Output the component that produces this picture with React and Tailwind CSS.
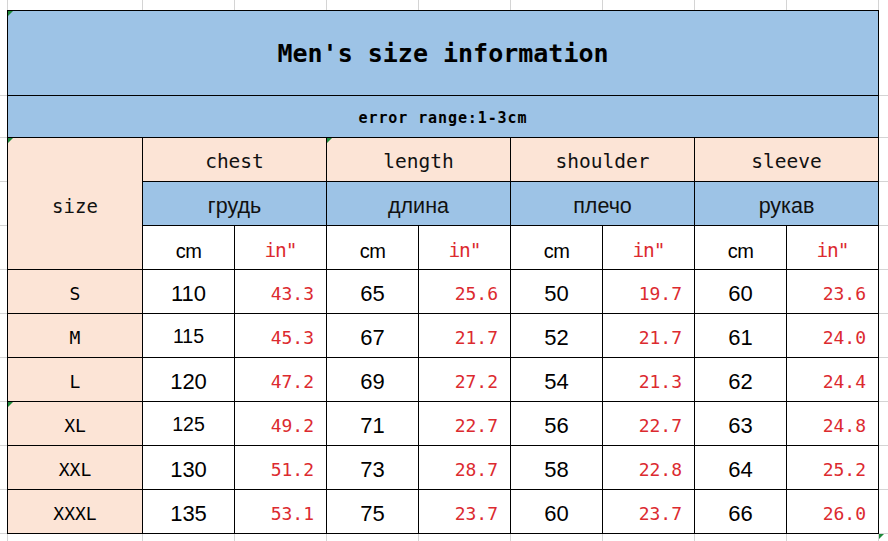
import React from "react";

const mono = "font-['DejaVu_Sans_Mono',monospace]";
const sans = "font-['Liberation_Sans',Arial,sans-serif]";
const blue = "bg-[#9dc3e6]";
const peach = "bg-[#fce4d6]";
const red = "text-[#dc2a2f]";

const rows = [
  ["S", "110", "43.3", "65", "25.6", "50", "19.7", "60", "23.6"],
  ["M", "115", "45.3", "67", "21.7", "52", "21.7", "61", "24.0"],
  ["L", "120", "47.2", "69", "27.2", "54", "21.3", "62", "24.4"],
  ["XL", "125", "49.2", "71", "22.7", "56", "22.7", "63", "24.8"],
  ["XXL", "130", "51.2", "73", "28.7", "58", "22.8", "64", "25.2"],
  ["XXXL", "135", "53.1", "75", "23.7", "60", "23.7", "66", "26.0"],
];

const measures = [
  ["chest", "грудь"],
  ["length", "длина"],
  ["shoulder", "плечо"],
  ["sleeve", "рукав"],
];

// little green marker excel puts in a cell corner
const Flag = () => (
  <span className="absolute left-0 top-0 h-[5px] w-[5px] bg-[#1f8a3b] [clip-path:polygon(0_0,100%_0,0_100%)]" />
);

// sheet gridlines outside the table
const rowHeights = [86, 42, 44, 44, 44, 44, 44, 44, 44, 44, 44];

const SideStrip = () => (
  <div className="flex flex-col">
    {rowHeights.map((h, i) => (
      <div
        key={i}
        className="box-border border-b border-[#d4d4d4]"
        style={{ height: h }}
      />
    ))}
  </div>
);

const ColStrip = ({ h, flagEnd }) => (
  <div className="flex" style={{ height: h }}>
    <div className="box-border w-[8px] border-r border-[#d4d4d4]" />
    <div className="box-border w-[135px] border-r border-[#d4d4d4]" />
    {Array.from({ length: 8 }).map((_, i) => (
      <div key={i} className="box-border w-[92px] border-r border-[#d4d4d4]" />
    ))}
    <div className="relative flex-1">{flagEnd && <Flag />}</div>
  </div>
);

const App = () => {
  return (
    <div className="flex h-[541px] w-[888px] flex-col overflow-hidden bg-white">
      <ColStrip h={10} />

      <div className="flex h-[524px]">
        <div className="w-[7px]">
          <SideStrip />
        </div>

        <div className="grid w-[872px] grid-cols-[134px_repeat(8,91px)] grid-rows-[84px_41px_repeat(9,43px)] gap-px bg-black p-px">
          <div
            className={`relative col-span-9 flex items-center justify-center ${blue} ${mono} pt-[2px] text-[25px] font-bold text-black`}
          >
            <Flag />
            Men's size information
          </div>
          <div
            className={`col-span-9 flex items-center justify-center ${blue} ${mono} pt-[4px] text-[15px] font-bold tracking-[0.9px] text-black`}
          >
            error range:1-3cm
          </div>

          <div
            className={`relative row-span-3 flex items-center justify-center ${peach} ${mono} pt-[6px] text-[19px] text-[#111]`}
          >
            <Flag />
            size
          </div>
          {measures.map(([en], i) => (
            <div
              key={en}
              className={`relative col-span-2 flex items-center justify-center ${peach} ${mono} pt-[5px] text-[19.5px] text-[#111]`}
            >
              {i === 1 && <Flag />}
              {en}
            </div>
          ))}
          {measures.map(([en, ru]) => (
            <div
              key={ru}
              className={`col-span-2 flex items-center justify-center ${blue} ${sans} pt-[5px] text-[21.5px] text-[#111]`}
            >
              {ru}
            </div>
          ))}
          {measures.map(([en]) => (
            <React.Fragment key={en + "u"}>
              <div
                className={`flex items-center justify-center bg-white ${sans} pt-[6px] text-[20px] tracking-[-0.5px] text-black`}
              >
                cm
              </div>
              <div
                className={`flex items-center justify-center bg-white ${mono} pt-[7px] text-[19.5px] tracking-[-1px] ${red}`}
              >
                in"
              </div>
            </React.Fragment>
          ))}

          {rows.map((r, ri) => (
            <React.Fragment key={r[0]}>
              <div
                className={`relative flex items-center justify-center ${peach} ${mono} pt-[3px] text-[18px] text-black`}
              >
                {ri === 3 && <Flag />}
                {r[0]}
              </div>
              {r.slice(1).map((v, i) =>
                i % 2 === 0 ? (
                  <div
                    key={i}
                    className={`flex items-center justify-center bg-white ${sans} pt-[3px] ${
                      i === 0 && (ri === 1 || ri === 3)
                        ? "text-[19.5px]"
                        : "text-[22px]"
                    } text-black`}
                  >
                    {v}
                  </div>
                ) : (
                  <div
                    key={i}
                    className={`flex items-center justify-end bg-white pr-[12px] pt-[3px] ${mono} text-[18px] ${red}`}
                  >
                    {v}
                  </div>
                )
              )}
            </React.Fragment>
          ))}
        </div>

        <div className="flex-1">
          <SideStrip />
        </div>
      </div>

      <ColStrip h={7} flagEnd />
    </div>
  );
};

export default App;
